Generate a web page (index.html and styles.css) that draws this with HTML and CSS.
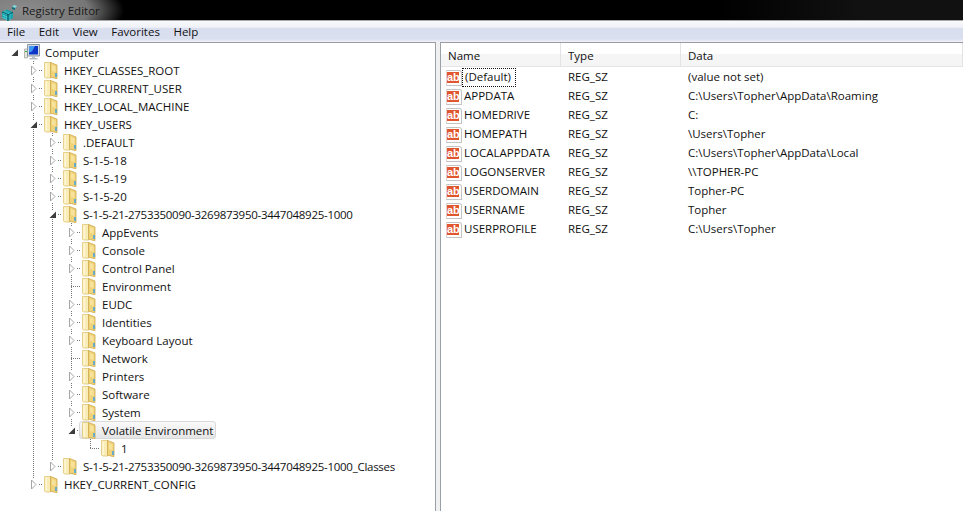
FILE: index.html
```html
<!DOCTYPE html>
<html lang="en">
<head>
    <meta charset="UTF-8">
    <meta name="viewport" content="width=device-width, initial-scale=1.0">
    <title>Registry Editor</title>
    <link rel="stylesheet" href="styles.css">
</head>
<body>
    <svg class="defs" width="0" height="0">
        <symbol id="folder" viewBox="0 0 16 17">
            <path d="M.5.5H7v15.500H1.500L.5 15z" fill="#f9ecb6" stroke="#e0c777" stroke-width=".8"/>
            <path d="M1.500 1.500H3V15H1.500z" fill="#fdf7d8"/>
            <path d="M6.500.5L13 3v13.700l-6.500-1.500z" fill="#f0d278" stroke="#cda84e" stroke-width=".8"/>
            <path d="M8 3l3.500 1.500V10L8 9z" fill="#f7e29c"/>
            <path d="M12 11v4" stroke="#3f9fe0" stroke-width="1.500"/>
        </symbol>
        <symbol id="open-arrow" viewBox="0 0 9 9">
            <path d="M8 1.500V8H1.500z" fill="#3c3c3c"/>
        </symbol>
        <symbol id="closed-arrow" viewBox="0 0 9 11">
            <path d="M2.500 1v9l4.500-4.500z" fill="#fff" stroke="#a6a6a6"/>
        </symbol>
    </svg>

    <header class="titlebar">
        <svg class="app-icon" width="16" height="18" viewBox="0 0 16 18">
            <path d="M1 9l5-2.500L12 9v6l-5 3-6-3z" fill="#16a3ad"/>
            <path d="M1 9l6 3 5-3M7 12v6" fill="none" stroke="#063c46" stroke-width=".8"/>
            <path d="M3 10v6M5 11v6M9 11.500v5.500M3.500 8l6 3M1.500 12l5 2.500M1.500 14.500l5 2.500" fill="none" stroke="#7fe6e4" stroke-width=".7" stroke-dasharray="1 1"/>
            <path d="M11 4l2-2 3 1-2 2z" fill="#7fdcdc"/>
            <path d="M11 4l3 1v2l-3-1z" fill="#0e6f7c"/>
        </svg>
        <span class="app-title">Registry Editor</span>
    </header>

    <nav class="menubar">
        <span>File</span>
        <span>Edit</span>
        <span>View</span>
        <span>Favorites</span>
        <span>Help</span>
    </nav>

    <main class="panes">
        <section class="tree">
            <div class="row root">
                <span class="cell"><svg class="arrow-open"><use href="#open-arrow"/></svg></span>
                <svg class="computer" width="16" height="16" viewBox="0 0 16 16">
                    <path d="M.5 5h3v9h-3z" fill="#e4e6da" stroke="#8a9088" stroke-width=".6"/>
                    <path d="M1 7.500h2" stroke="#2fae45" stroke-width="1.200"/>
                    <path d="M3.500.5h12v11.500h-12z" fill="#d5dae0" stroke="#8d96a3"/>
                    <path d="M5 2h9v8.500H5z" fill="#0d36c6"/>
                    <path d="M5 2h6l-3 5.500-3 1z" fill="#3f97f0"/>
                    <path d="M8 12.500h3V14H8zM5.500 14h8v1.500h-8z" fill="#b6bcc4"/>
                </svg>
                <span class="label">Computer</span>
            </div>

            <div class="row"><span class="cell closed"><svg class="arrow-closed"><use href="#closed-arrow"/></svg></span><svg class="folder"><use href="#folder"/></svg><span class="label">HKEY_CLASSES_ROOT</span></div>
            <div class="row"><span class="cell closed"><svg class="arrow-closed"><use href="#closed-arrow"/></svg></span><svg class="folder"><use href="#folder"/></svg><span class="label">HKEY_CURRENT_USER</span></div>
            <div class="row"><span class="cell closed"><svg class="arrow-closed"><use href="#closed-arrow"/></svg></span><svg class="folder"><use href="#folder"/></svg><span class="label">HKEY_LOCAL_MACHINE</span></div>
            <div class="row"><span class="cell open"><svg class="arrow-open"><use href="#open-arrow"/></svg></span><svg class="folder"><use href="#folder"/></svg><span class="label">HKEY_USERS</span></div>

            <div class="row"><span class="cell line"></span><span class="cell closed"><svg class="arrow-closed"><use href="#closed-arrow"/></svg></span><svg class="folder"><use href="#folder"/></svg><span class="label">.DEFAULT</span></div>
            <div class="row"><span class="cell line"></span><span class="cell closed"><svg class="arrow-closed"><use href="#closed-arrow"/></svg></span><svg class="folder"><use href="#folder"/></svg><span class="label">S-1-5-18</span></div>
            <div class="row"><span class="cell line"></span><span class="cell closed"><svg class="arrow-closed"><use href="#closed-arrow"/></svg></span><svg class="folder"><use href="#folder"/></svg><span class="label">S-1-5-19</span></div>
            <div class="row"><span class="cell line"></span><span class="cell closed"><svg class="arrow-closed"><use href="#closed-arrow"/></svg></span><svg class="folder"><use href="#folder"/></svg><span class="label">S-1-5-20</span></div>
            <div class="row"><span class="cell line"></span><span class="cell open"><svg class="arrow-open"><use href="#open-arrow"/></svg></span><svg class="folder"><use href="#folder"/></svg><span class="label sid">S-1-5-21-2753350090-3269873950-3447048925-1000</span></div>

            <div class="row"><span class="cell line"></span><span class="cell line"></span><span class="cell closed"><svg class="arrow-closed"><use href="#closed-arrow"/></svg></span><svg class="folder"><use href="#folder"/></svg><span class="label">AppEvents</span></div>
            <div class="row"><span class="cell line"></span><span class="cell line"></span><span class="cell closed"><svg class="arrow-closed"><use href="#closed-arrow"/></svg></span><svg class="folder"><use href="#folder"/></svg><span class="label">Console</span></div>
            <div class="row"><span class="cell line"></span><span class="cell line"></span><span class="cell closed"><svg class="arrow-closed"><use href="#closed-arrow"/></svg></span><svg class="folder"><use href="#folder"/></svg><span class="label">Control Panel</span></div>
            <div class="row"><span class="cell line"></span><span class="cell line"></span><span class="cell leaf"></span><svg class="folder"><use href="#folder"/></svg><span class="label">Environment</span></div>
            <div class="row"><span class="cell line"></span><span class="cell line"></span><span class="cell closed"><svg class="arrow-closed"><use href="#closed-arrow"/></svg></span><svg class="folder"><use href="#folder"/></svg><span class="label">EUDC</span></div>
            <div class="row"><span class="cell line"></span><span class="cell line"></span><span class="cell closed"><svg class="arrow-closed"><use href="#closed-arrow"/></svg></span><svg class="folder"><use href="#folder"/></svg><span class="label">Identities</span></div>
            <div class="row"><span class="cell line"></span><span class="cell line"></span><span class="cell closed"><svg class="arrow-closed"><use href="#closed-arrow"/></svg></span><svg class="folder"><use href="#folder"/></svg><span class="label">Keyboard Layout</span></div>
            <div class="row"><span class="cell line"></span><span class="cell line"></span><span class="cell leaf"></span><svg class="folder"><use href="#folder"/></svg><span class="label">Network</span></div>
            <div class="row"><span class="cell line"></span><span class="cell line"></span><span class="cell closed"><svg class="arrow-closed"><use href="#closed-arrow"/></svg></span><svg class="folder"><use href="#folder"/></svg><span class="label">Printers</span></div>
            <div class="row"><span class="cell line"></span><span class="cell line"></span><span class="cell closed"><svg class="arrow-closed"><use href="#closed-arrow"/></svg></span><svg class="folder"><use href="#folder"/></svg><span class="label">Software</span></div>
            <div class="row"><span class="cell line"></span><span class="cell line"></span><span class="cell closed"><svg class="arrow-closed"><use href="#closed-arrow"/></svg></span><svg class="folder"><use href="#folder"/></svg><span class="label">System</span></div>
            <div class="row"><span class="cell line"></span><span class="cell line"></span><span class="cell open last"><svg class="arrow-open"><use href="#open-arrow"/></svg></span><span class="selected"><svg class="folder"><use href="#folder"/></svg><span class="label">Volatile Environment</span></span></div>
            <div class="row"><span class="cell line"></span><span class="cell line"></span><span class="cell"></span><span class="cell leaf end"></span><svg class="folder"><use href="#folder"/></svg><span class="label">1</span></div>
            <div class="row"><span class="cell line"></span><span class="cell closed last"><svg class="arrow-closed"><use href="#closed-arrow"/></svg></span><svg class="folder"><use href="#folder"/></svg><span class="label sid">S-1-5-21-2753350090-3269873950-3447048925-1000_Classes</span></div>
            <div class="row"><span class="cell closed last"><svg class="arrow-closed"><use href="#closed-arrow"/></svg></span><svg class="folder"><use href="#folder"/></svg><span class="label">HKEY_CURRENT_CONFIG</span></div>
        </section>

        <section class="values">
            <div class="columns">
                <span class="col-name">Name</span>
                <span class="col-type">Type</span>
                <span class="col-data">Data</span>
            </div>
            <div class="value"><span class="col-name"><span class="string"><b>ab</b></span><span class="focused">(Default)</span></span><span class="col-type">REG_SZ</span><span class="col-data">(value not set)</span></div>
            <div class="value"><span class="col-name"><span class="string"><b>ab</b></span><span class="value-name">APPDATA</span></span><span class="col-type">REG_SZ</span><span class="col-data">C:\Users\Topher\AppData\Roaming</span></div>
            <div class="value"><span class="col-name"><span class="string"><b>ab</b></span><span class="value-name">HOMEDRIVE</span></span><span class="col-type">REG_SZ</span><span class="col-data">C:</span></div>
            <div class="value"><span class="col-name"><span class="string"><b>ab</b></span><span class="value-name">HOMEPATH</span></span><span class="col-type">REG_SZ</span><span class="col-data">\Users\Topher</span></div>
            <div class="value"><span class="col-name"><span class="string"><b>ab</b></span><span class="value-name">LOCALAPPDATA</span></span><span class="col-type">REG_SZ</span><span class="col-data">C:\Users\Topher\AppData\Local</span></div>
            <div class="value"><span class="col-name"><span class="string"><b>ab</b></span><span class="value-name">LOGONSERVER</span></span><span class="col-type">REG_SZ</span><span class="col-data">\\TOPHER-PC</span></div>
            <div class="value"><span class="col-name"><span class="string"><b>ab</b></span><span class="value-name">USERDOMAIN</span></span><span class="col-type">REG_SZ</span><span class="col-data">Topher-PC</span></div>
            <div class="value"><span class="col-name"><span class="string"><b>ab</b></span><span class="value-name">USERNAME</span></span><span class="col-type">REG_SZ</span><span class="col-data">Topher</span></div>
            <div class="value"><span class="col-name"><span class="string"><b>ab</b></span><span class="value-name">USERPROFILE</span></span><span class="col-type">REG_SZ</span><span class="col-data">C:\Users\Topher</span></div>
        </section>
    </main>
</body>
</html>
```

FILE: styles.css
```css
* {
    margin: 0;
    padding: 0;
    box-sizing: border-box;
}

html, body {
    height: 100%;
    overflow: hidden;
}

body {
    display: flex;
    flex-direction: column;
    font-family: 'Open Sans', 'Noto Sans', sans-serif;
    font-size: 11.5px;
    color: #111;
    background: #f0f0f0;
}

.defs {
    display: block;
    height: 0;
}

/* Title bar */
.titlebar {
    height: 21px;
    display: flex;
    align-items: center;
    gap: 5px;
    padding-left: 1px;
    flex-shrink: 0;
    color: #1a1a1a;
    font-size: 11.5px;
    border-bottom: 1px solid #a8a8a8;
    background:
        linear-gradient(90deg, transparent 0, transparent 720px, #111 860px, #111 100%),
        radial-gradient(ellipse 100px 36px at 24px 10px, #8c8c8c 0, #767676 65%, rgba(0, 0, 0, 0) 100%),
        #000;
}

.app-icon {
    margin-top: 4px;
    flex-shrink: 0;
}

/* Menu */
.menubar {
    height: 21px;
    display: flex;
    align-items: center;
    gap: 13.5px;
    padding-left: 7px;
    flex-shrink: 0;
    background: linear-gradient(#f9fafc 0, #eff1f7 30%, #dadff0 35%, #dadff0 85%, #f0f2f8 100%);
}

/* Panes */
.panes {
    flex: 1;
    display: flex;
    min-height: 0;
}

.tree {
    width: 436px;
    flex-shrink: 0;
    padding-left: 5px;
    background: #fff;
    border-right: 1px solid #9aa0a6;
    border-top: 1px solid #9a9aa2;
}

.row {
    height: 18px;
    display: flex;
    align-items: center;
}

.row:not(.root) {
    padding-left: 19px;
}

.cell {
    width: 19px;
    height: 18px;
    flex-shrink: 0;
    display: flex;
    align-items: center;
    justify-content: center;
}

/* dotted vertical guide and horizontal connector */
.line {
    background-image: repeating-linear-gradient(#777 0 1px, transparent 1px 2px);
    background-size: 1px 100%;
    background-position: 9px 0;
    background-repeat: no-repeat;
}

.closed,
.open,
.leaf {
    background-image:
        repeating-linear-gradient(#777 0 1px, transparent 1px 2px),
        repeating-linear-gradient(90deg, #777 0 1px, transparent 1px 2px);
    background-size: 1px 100%, 10px 1px;
    background-position: 9px 0, 9px 9px;
    background-repeat: no-repeat;
}

.last,
.end {
    background-size: 1px 9px, 10px 1px;
}

.arrow-open {
    width: 9px;
    height: 9px;
    background: #fff;
    margin-left: -1px;
}

.arrow-closed {
    width: 9px;
    height: 11px;
    background: #fff;
}

.folder {
    width: 16px;
    height: 17px;
    flex-shrink: 0;
    margin-left: 1px;
}

.computer {
    flex-shrink: 0;
}

.label {
    padding-left: 4px;
    white-space: nowrap;
}

.root .label {
    padding-left: 5px;
}

.sid {
    letter-spacing: -0.27px;
}

.selected {
    height: 18px;
    display: flex;
    align-items: center;
    margin-left: -2px;
    padding: 0 2px 0 1px;
    border: 1px solid #d9d9d9;
    border-radius: 3px;
    background: linear-gradient(#fafafa, #e5e5e5);
}

/* Value list */
.values {
    flex: 1;
    margin-left: 4px;
    background: #fff;
    border-left: 1px solid #9aa0a6;
    border-top: 1px solid #9a9aa2;
}

.columns {
    height: 24px;
    margin-bottom: 1px;
    display: flex;
    align-items: center;
    border-bottom: 1px solid #e5e5e5;
    background: linear-gradient(#fff 50%, #f5f5f6 50%);
}

.columns span {
    height: 100%;
    display: flex;
    align-items: center;
    padding: 2px 0 0 7px;
    border-right: 1px solid #e3e3e3;
}

.col-name {
    width: 120px;
    flex-shrink: 0;
    display: flex;
    align-items: center;
}

.col-type {
    width: 120px;
    flex-shrink: 0;
    padding: 0 0 2px 7px;
}

.col-data {
    flex: 1;
    padding: 0 0 2px 7px;
}

.value {
    height: 19px;
    display: flex;
    align-items: center;
}

/* string value icon: a page with the red "ab" band */
.string {
    width: 16px;
    height: 16px;
    margin-left: 5px;
    flex-shrink: 0;
    position: relative;
    border: 1px solid #c4c4c4;
    border-left-color: #e6d2cb;
    border-radius: 0 3px 0 0;
    background: #fff;
}

.string b {
    position: absolute;
    left: 0;
    top: 1px;
    width: 12px;
    height: 11px;
    font-family: 'Liberation Sans', sans-serif;
    font-size: 11px;
    line-height: 10px;
    text-align: center;
    color: #fff;
    background: #e0562f;
}

.value-name {
    padding: 0 0 2px 2px;
}

.focused {
    padding: 0 5px 2px 3px;
    height: 19px;
    display: flex;
    align-items: center;
    outline: 1px dotted #111;
    outline-offset: -1px;
}
```
